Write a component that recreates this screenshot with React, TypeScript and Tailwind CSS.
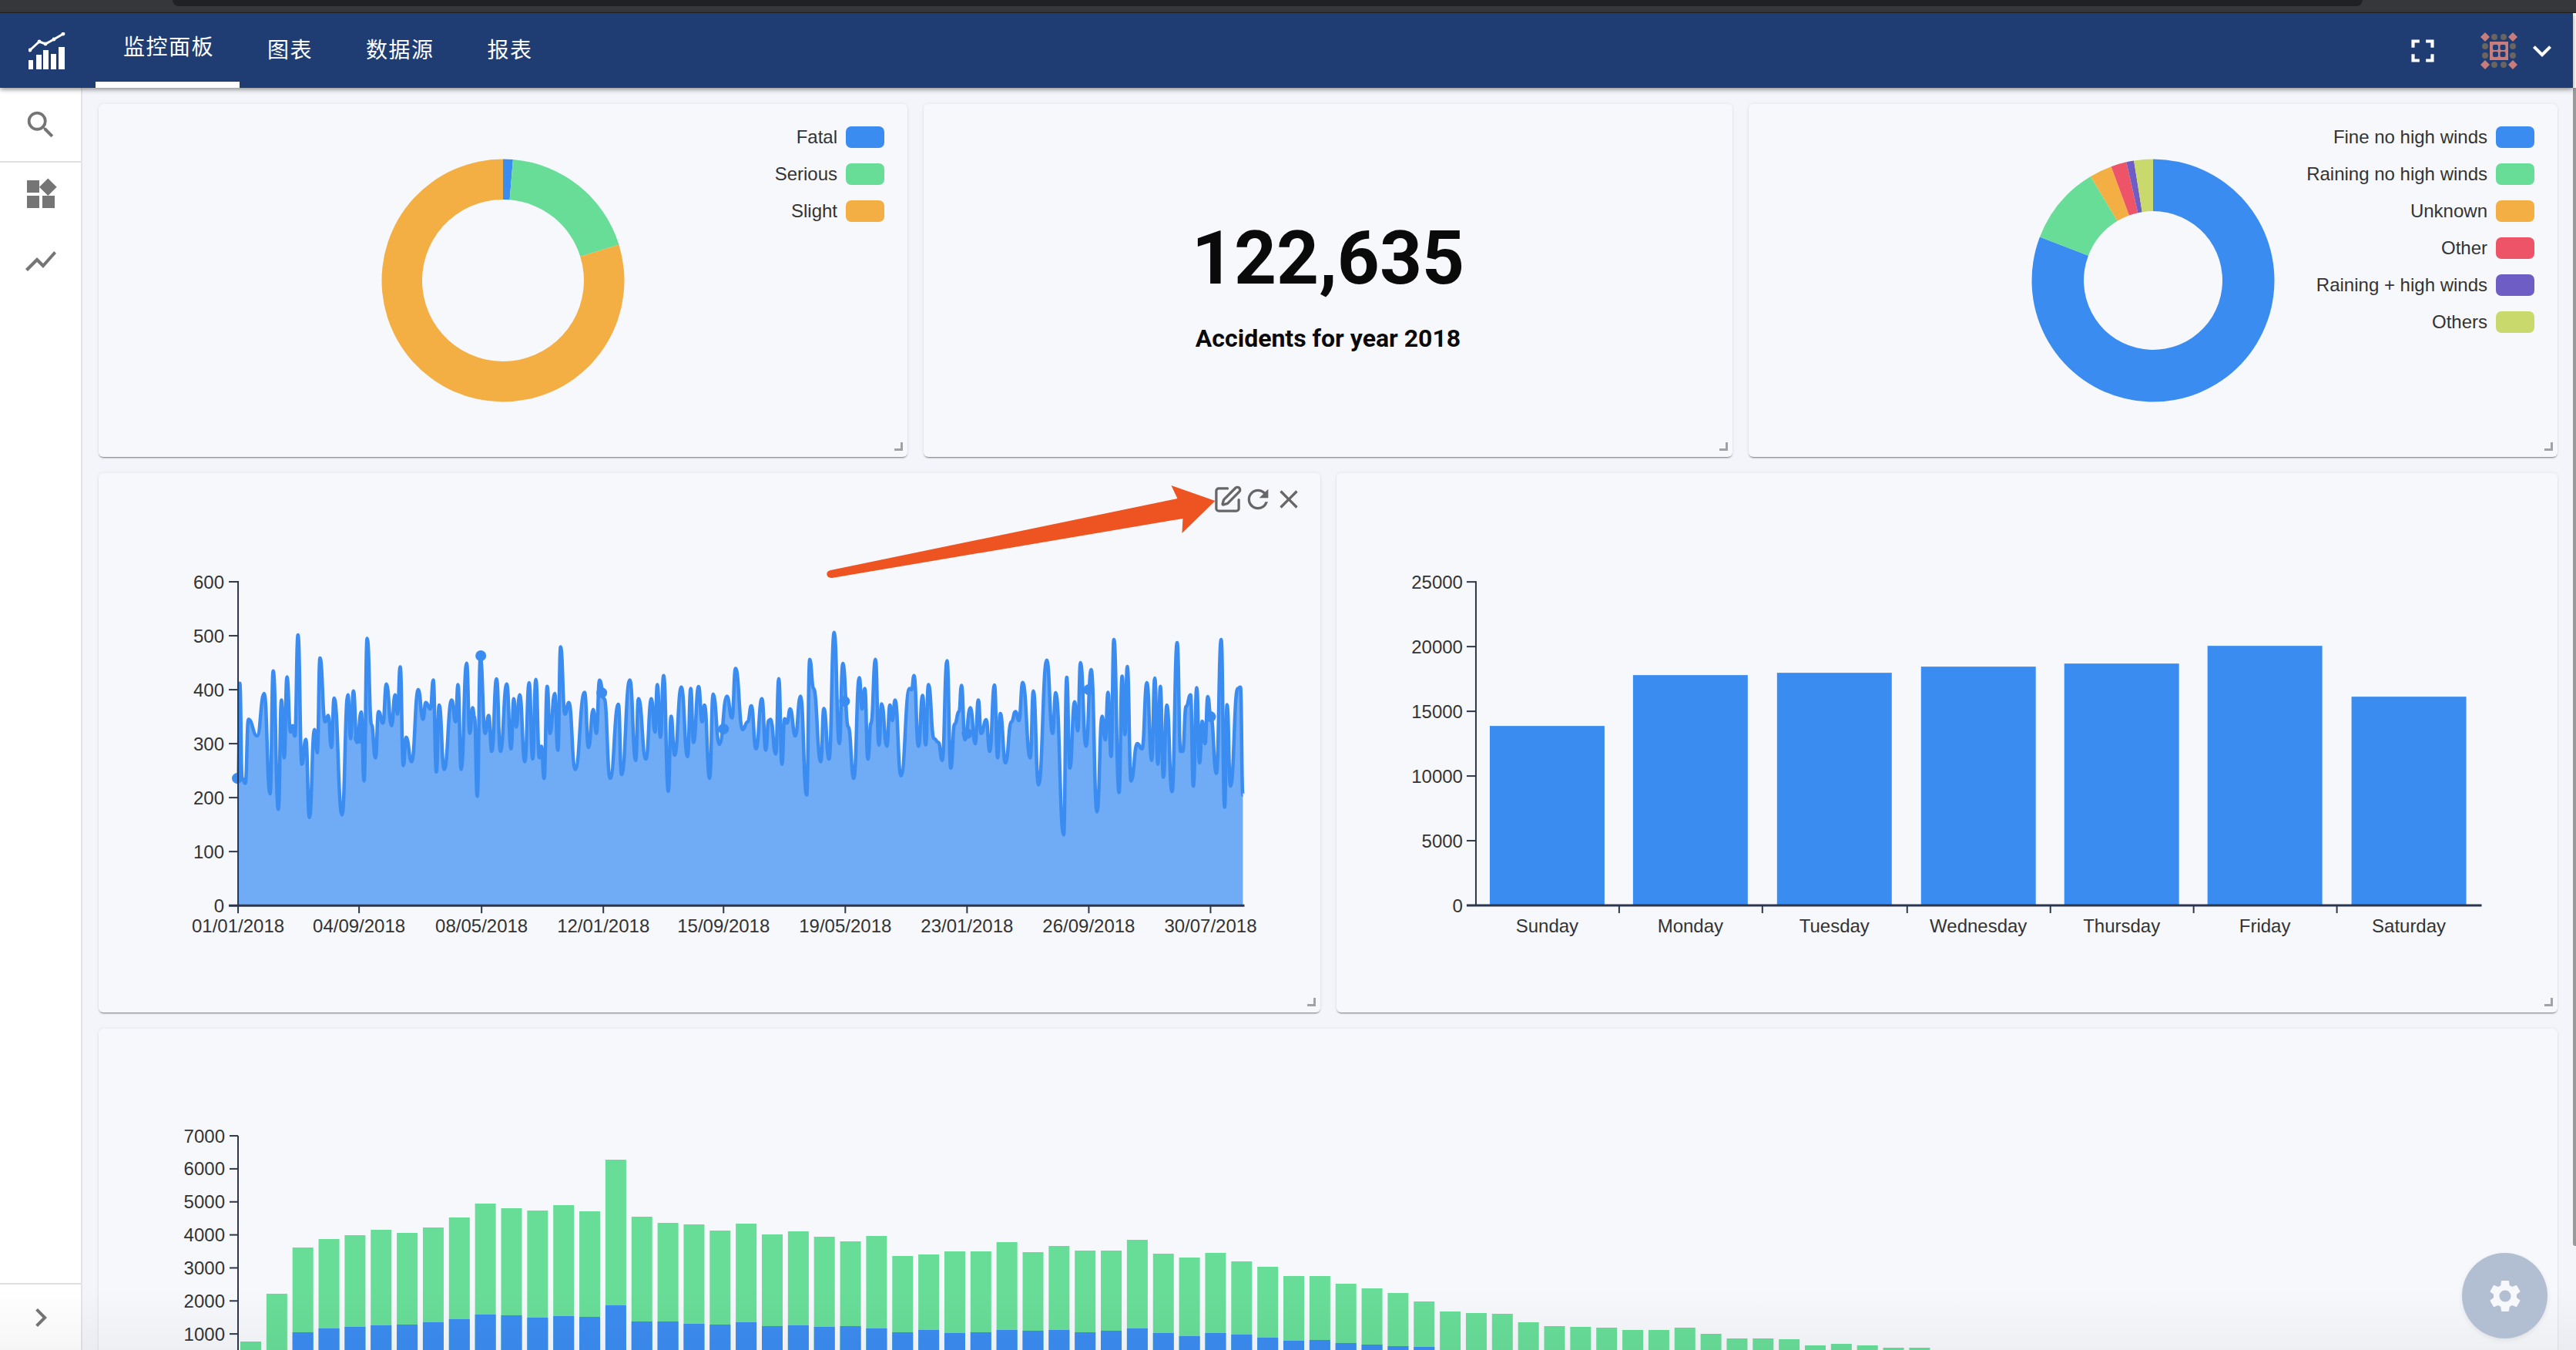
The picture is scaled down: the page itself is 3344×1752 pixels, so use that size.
import { SquarePen } from "lucide-react";
import {
  MdClose,
  MdExpandMore,
  MdFullscreen,
  MdKeyboardArrowRight,
  MdRefresh,
  MdSearch,
  MdSettings,
  MdShowChart,
  MdWidgets,
} from "react-icons/md";

const BLUE = "#3b8cf0";
const GREEN = "#68dd98";
const ORANGE = "#f3af44";
const RED = "#ee5468";
const PURPLE = "#6f5dc6";
const LIME = "#c9d96c";

type Point = [number, number];

// traced from the reference, first half in one crop scale, second half in another
const LINE_A: number[] = [
  214,870, 218,500, 224,870, 232,890, 240,640, 262,705, 280,540, 295,930, 303,452, 316,990, 324,565, 331,790, 338,475, 347,690, 352,665, 358,705,
  366,312, 376,815, 386,718, 395,1022, 408,680, 415,770, 422,402, 435,650, 443,625, 451,750, 458,558, 478,1012, 493,545, 500,715, 507,530, 516,730,
  527,612, 534,880, 542,325, 553,660, 563,790, 571,610, 582,655, 591,503, 604,665, 613,545, 619,620, 626,436, 634,820, 641,710, 655,805, 672,525,
  684,640, 691,575, 703,600, 710,487, 718,845, 725,585, 738,835, 757,565, 767,650, 773,505, 781,835, 795,422, 803,695, 810,595, 815,630, 822,940,
  830,400, 842,695, 851,625, 859,765, 871,483, 881,765, 897,503, 908,755, 915,560, 921,670, 930,545, 943,805, 954,498, 963,795, 971,485, 980,790,
  985,745, 992,870, 1000,512, 1007,695, 1019,540, 1027,760, 1034,358, 1045,620, 1055,575, 1071,835, 1095,535, 1105,750, 1117,602, 1125,695, 1133,488,
  1145,560, 1160,870, 1181,582, 1189,855, 1210,487, 1225,800, 1232,560, 1251,795, 1265,560, 1274,690, 1280,505, 1288,710, 1296,470, 1308,920, 1315,628,
  1324,780, 1341,515, 1357,785, 1365,520, 1372,730, 1385,513, 1394,650, 1400,585, 1413,870, 1422,542, 1438,738, 1457,550, 1470,635, 1479,442, 1497,680,
  1510,650, 1519,588, 1531,755, 1546,560, 1556,760, 1563,645,
];
const LINE_B: number[] = [
  0,640, 15,775, 24,482, 33,815, 41,638, 48,655, 57,600, 72,705, 87,550, 105,935, 114,407, 125,520, 146,805, 155,598, 170,795, 185,302, 200,735, 210,423,
  226,670, 242,870, 258,478, 266,600, 274,520, 283,795, 292,655, 305,407, 315,740, 323,580, 338,745, 347,585, 354,645, 362,565, 379,860, 404,520, 410,525,
  417,470, 430,745, 442,547, 451,740, 459,505, 475,715, 488,730, 499,800, 513,412, 524,830, 535,660, 548,610, 555,508, 565,720, 581,595, 595,735, 604,565,
  612,695, 627,642, 637,765, 651,507, 660,790, 668,618, 683,810, 700,650, 712,610, 722,645, 733,497, 755,790, 764,530, 779,895, 803,410, 820,695, 829,537,
  852,1090, 861,477, 870,830, 884,572, 893,685, 901,420, 917,745, 932,447, 949,1000, 964,628, 973,720, 981,535, 990,785, 998,330, 1013,925, 1022,472,
  1030,700, 1037,435, 1048,880, 1066,735, 1080,755, 1094,498, 1108,800, 1117,480, 1126,815, 1133,512, 1142,865, 1152,585, 1167,922, 1182,342, 1192,765,
  1198,765, 1208,590, 1221,545, 1229,900, 1239,517, 1247,810, 1255,648, 1263,735, 1271,552, 1280,630, 1296,850, 1310,330, 1320,982, 1327,583, 1337,900,
  1358,520, 1366,515, 1373,935,
];

function convert(raw: number[], left: number, scaleX: number): Point[] {
  const out: Point[] = [];
  for (let i = 0; i < raw.length; i += 2) {
    out.push([left + raw[i] / scaleX, 720 + raw[i + 1] / 3]);
  }
  return out;
}

const LINE_POINTS: Point[] = [...convert(LINE_A, 200, 1.96), ...convert(LINE_B, 1000, 2.24)];

function smoothPath(pts: Point[]) {
  let d = `M${pts[0][0]} ${pts[0][1]}`;
  for (let i = 1; i < pts.length; i++) {
    const [px, py] = pts[i - 1];
    const [x, y] = pts[i];
    const mid = (px + x) / 2;
    d += ` C${mid} ${py} ${mid} ${y} ${x} ${y}`;
  }
  return d;
}

const LINE_D = smoothPath(LINE_POINTS);
const AREA_D = `${LINE_D} L1613 1175 L309 1175 Z`;

const LINE_DOTS: Point[] = [
  [308, 1010], [466, 958], [624, 851], [781, 899], [939, 946], [1096, 910], [1255, 952], [1413, 895], [1571, 930],
];
const LINE_XTICKS: [number, string][] = [
  [309, "01/01/2018"], [466, "04/09/2018"], [625, "08/05/2018"], [783, "12/01/2018"], [939, "15/09/2018"],
  [1097, "19/05/2018"], [1255, "23/01/2018"], [1413, "26/09/2018"], [1571, "30/07/2018"],
];

const WEEK_BARS: [number, number, string][] = [
  [1933, 942, "Sunday"], [2119, 876, "Monday"], [2306, 873, "Tuesday"], [2493, 865, "Wednesday"],
  [2679, 861, "Thursday"], [2865, 838, "Friday"], [3052, 904, "Saturday"],
];

// [top of the green bar, top of the blue bar] per bar, in page pixels
const STACKED: Point[] = [
  [1741,1770],[1679,1755],[1619,1729],[1608,1724],[1603,1722],[1596,1720],[1600,1719],[1593,1716],[1580,1712],[1562,1706],
  [1568,1707],[1571,1710],[1564,1708],[1572,1709],[1505,1694],[1579,1715],[1587,1715],[1589,1718],[1597,1719],[1588,1716],
  [1602,1721],[1598,1720],[1605,1722],[1611,1721],[1604,1724],[1630,1729],[1628,1726],[1624,1730],[1624,1729],[1612,1726],
  [1625,1727],[1617,1726],[1623,1729],[1623,1727],[1609,1724],[1627,1730],[1632,1734],[1626,1730],[1637,1732],[1644,1736],
  [1656,1740],[1656,1739],[1666,1743],[1672,1745],[1678,1747],[1689,1748],[1702,1760],[1704,1760],[1705,1760],[1716,1760],
  [1721,1760],[1722,1760],[1723,1760],[1726,1760],[1726,1760],[1723,1760],[1731,1760],[1737,1760],[1737,1760],[1738,1760],
  [1746,1760],[1744,1760],[1746,1760],[1749,1760],[1749,1760],
];

function arc(cx: number, cy: number, r: number, ir: number, from: number, to: number) {
  const rad = (a: number) => (a * Math.PI) / 180;
  const pt = (radius: number, a: number) => `${cx + radius * Math.sin(rad(a))} ${cy - radius * Math.cos(rad(a))}`;
  const large = to - from > 180 ? 1 : 0;
  return `M${pt(r, from)} A${r} ${r} 0 ${large} 1 ${pt(r, to)} L${pt(ir, to)} A${ir} ${ir} 0 ${large} 0 ${pt(ir, from)} Z`;
}

function Donut({ inner, slices }: { inner: number; slices: [number, number, string][] }) {
  return (
    <svg viewBox="0 0 316 316" className="w-[316px] h-[316px]">
      {slices.map(([from, to, color]) => (
        <path key={from} d={arc(158, 158, 157.5, inner, from, to)} fill={color} />
      ))}
    </svg>
  );
}

function Card({ children, className }: { children: React.ReactNode; className?: string }) {
  return (
    <div
      className={
        "relative rounded-[6px] bg-[#f7f8fc] shadow-[0_2px_2px_-1px_rgba(0,0,0,0.5),0_0_5px_rgba(0,0,0,0.07)] " +
        (className ?? "")
      }
    >
      {children}
    </div>
  );
}

function ResizeHandle() {
  return <div className="absolute right-[6px] bottom-[8px] w-[11px] h-[11px] border-r-[3px] border-b-[3px] border-[#a0a2a8]" />;
}

function Legend({ items }: { items: [string, string][] }) {
  return (
    <div className="absolute right-[30px] top-[29px] flex flex-col items-end gap-[20px]">
      {items.map(([label, color]) => (
        <div key={label} className="flex h-[28px] items-center gap-[11px] text-[24px] text-[#333]">
          <span>{label}</span>
          <span className="w-[50px] h-[28px] rounded-[7px]" style={{ backgroundColor: color }} />
        </div>
      ))}
    </div>
  );
}

function Logo() {
  return (
    <svg viewBox="0 0 48 48" className="w-[48px] h-[48px]">
      <rect x="0" y="36" width="6" height="12" fill="#fff" />
      <rect x="10" y="29" width="7" height="19" fill="#fff" />
      <rect x="19" y="23" width="7" height="25" fill="#fff" />
      <rect x="29" y="28" width="7" height="20" fill="#fff" />
      <rect x="39" y="19" width="8" height="29" fill="#fff" />
      <polyline points="2,23 14,12 22,15 33,9 45,2" fill="none" stroke="#fff" strokeWidth="3" />
      <circle cx="2" cy="23" r="2.4" fill="#fff" />
      <circle cx="14" cy="12" r="2.4" fill="#fff" />
      <circle cx="22" cy="15" r="2.4" fill="#fff" />
      <circle cx="33" cy="9" r="2.4" fill="#fff" />
      <circle cx="45" cy="2" r="2.4" fill="#fff" />
    </svg>
  );
}

function Avatar() {
  const diamonds: Point[] = [[6, 6], [42, 6], [6, 42], [42, 42]];
  const dots: Point[] = [[18, 6], [30, 6], [18, 42], [30, 42], [6, 18], [6, 30], [42, 18], [42, 30]];
  const inner: Point[] = [[16, 16], [25.5, 16], [16, 25], [25.5, 25]];
  return (
    <svg viewBox="0 0 48 48" className="w-[48px] h-[48px]">
      {dots.map(([x, y]) => (
        <circle key={`${x}-${y}`} cx={x} cy={y} r="4" fill="#6b6560" />
      ))}
      {diamonds.map(([x, y]) => (
        <polygon key={`${x}-${y}`} points={`${x},${y - 6} ${x + 6},${y} ${x},${y + 6} ${x - 6},${y}`} fill="#c97c7c" />
      ))}
      <rect x="12" y="12" width="24" height="24" fill="#c97c7c" />
      {inner.map(([x, y]) => (
        <rect key={`${x}-${y}`} x={x} y={y} width="7" height="7" rx="2" fill="#1f3d73" />
      ))}
    </svg>
  );
}

function LineChart() {
  const yTicks = [0, 100, 200, 300, 400, 500, 600];
  return (
    <svg viewBox="128 614 1585 700" className="w-full h-full block">
      <path d={AREA_D} fill="#70abf5" />
      <path d={LINE_D} fill="none" stroke={BLUE} strokeWidth="4.5" strokeLinejoin="round" />
      {LINE_DOTS.map(([x, y]) => (
        <circle key={x} cx={x} cy={y} r="7" fill={BLUE} />
      ))}
      <line x1="309" y1="754" x2="309" y2="1176" stroke="#2d3748" strokeWidth="2" />
      <line x1="297" y1="1175" x2="1615" y2="1175" stroke="#2a3550" strokeWidth="3" />
      {yTicks.map((t) => {
        const y = 1175 - t * 0.7;
        return (
          <g key={t}>
            <line x1="297" y1={y} x2="309" y2={y} stroke="#2d3748" strokeWidth="2" />
            <text x="291" y={y + 8.5} textAnchor="end" className="text-[24px] fill-[#333]">
              {t}
            </text>
          </g>
        );
      })}
      {LINE_XTICKS.map(([x, label]) => (
        <g key={label}>
          <line x1={x} y1="1175" x2={x} y2="1185" stroke="#2d3748" strokeWidth="2" />
          <text x={x} y="1210" textAnchor="middle" className="text-[24px] fill-[#333]">
            {label}
          </text>
        </g>
      ))}
      <path d="M1078 740 L1528 647 L1520 630 L1577 650 L1534 692 L1535 673 L1080 750 Q1073 750 1073 745 Q1073 741 1078 740 Z" fill="#ee5322" />
    </svg>
  );
}

function WeekChart() {
  const yTicks = [0, 5000, 10000, 15000, 20000, 25000];
  const xTicks = [2101, 2287, 2475, 2661, 2847, 3033];
  return (
    <svg viewBox="1734 614 1586 700" className="w-full h-full block">
      {WEEK_BARS.map(([x, top, label]) => (
        <g key={label}>
          <rect x={x} y={top} width="149" height={1175 - top} fill={BLUE} />
          <text x={x + 74.5} y="1210" textAnchor="middle" className="text-[24px] fill-[#333]">
            {label}
          </text>
        </g>
      ))}
      <line x1="1915" y1="754" x2="1915" y2="1175" stroke="#2d3748" strokeWidth="2" />
      <line x1="1903" y1="1175" x2="3221" y2="1175" stroke="#2a3550" strokeWidth="3" />
      {yTicks.map((t) => {
        const y = 1175 - (t / 25000) * 420;
        return (
          <g key={t}>
            <line x1="1903" y1={y} x2="1915" y2={y} stroke="#2d3748" strokeWidth="2" />
            <text x="1898" y={y + 8.5} textAnchor="end" className="text-[24px] fill-[#333]">
              {t}
            </text>
          </g>
        );
      })}
      {xTicks.map((x) => (
        <line key={x} x1={x} y1="1175" x2={x} y2="1185" stroke="#2d3748" strokeWidth="2" />
      ))}
    </svg>
  );
}

function StackedChart() {
  const yTicks = [1000, 2000, 3000, 4000, 5000, 6000, 7000];
  return (
    <svg viewBox="128 1335 3192 660" className="w-full h-full block">
      {STACKED.map(([green, blue], i) => {
        const x = 312 + i * 33.85;
        return (
          <g key={i}>
            <rect x={x} y={green} width="27" height={1775 - green} fill={GREEN} />
            <rect x={x} y={blue} width="27" height={1775 - blue} fill={BLUE} />
          </g>
        );
      })}
      <line x1="309" y1="1474" x2="309" y2="1775" stroke="#2d3748" strokeWidth="2" />
      {yTicks.map((t) => {
        const y = 1774 - t * 0.04285;
        return (
          <g key={t}>
            <line x1="298" y1={y} x2="309" y2={y} stroke="#2d3748" strokeWidth="2" />
            <text x="292" y={y + 8.5} textAnchor="end" className="text-[24px] fill-[#333]">
              {t}
            </text>
          </g>
        );
      })}
    </svg>
  );
}

export default function App() {
  const tabs = ["监控面板", "图表", "数据源", "报表"];
  return (
    <div className="relative h-[1752px] w-full overflow-hidden bg-white font-['Liberation_Sans','Noto_Sans_CJK_SC',sans-serif]">
      {/* browser chrome leftover at the top */}
      <div className="h-[17px] bg-[#36373b] border-b border-[#1f2022]">
        <div className="ml-[224px] mr-[277px] h-[8px] rounded-b-[10px] bg-[#202124]" />
      </div>

      <header className="relative z-10 mr-[4px] flex h-[97px] items-stretch bg-[#1f3d73] shadow-[0_2px_6px_rgba(0,0,0,0.45)]">
        <div className="flex w-[124px] items-center pl-[37px]">
          <Logo />
        </div>
        <nav className="flex">
          {tabs.map((tab, i) => (
            <div
              key={tab}
              className={
                "flex items-center pl-[36px] pr-[33px] pb-[6px] text-[28px] tracking-[1.5px] text-white font-['Noto_Sans_CJK_SC',sans-serif] " +
                (i === 0 ? "border-b-[8px] border-white pb-[0px]" : "")
              }
            >
              {tab}
            </div>
          ))}
        </nav>
        <div className="ml-auto flex items-center pr-[16px] text-white">
          <MdFullscreen size={50} />
          <div className="ml-[50px]">
            <Avatar />
          </div>
          <div className="ml-[8px]">
            <MdExpandMore size={48} />
          </div>
        </div>
      </header>

      <div className="flex h-[1638px]">
        <aside className="flex w-[107px] shrink-0 flex-col border-r-2 border-[#e2e4e9] bg-white text-[#757575]">
          <div className="flex h-[97px] items-center justify-center border-b-2 border-[#dedfe2]">
            <MdSearch size={46} />
          </div>
          <div className="flex flex-col items-center gap-[39px] pt-[17px]">
            <MdWidgets size={48} />
            <MdShowChart size={48} />
          </div>
          <div className="mt-auto flex h-[87px] items-center justify-center border-t-2 border-[#dedfe2]">
            <MdKeyboardArrowRight size={48} />
          </div>
        </aside>

        <main className="flex min-w-0 flex-1 flex-col gap-[21px] overflow-hidden bg-[#f3f5fa] pt-[21px] pl-[21px] pr-[24px]">
          <div className="grid h-[458px] shrink-0 grid-cols-3 gap-[21px]">
            <Card className="flex items-center justify-center">
              <Donut inner={105} slices={[[0, 4.7, BLUE], [4.7, 72.8, GREEN], [72.8, 360, ORANGE]]} />
              <Legend items={[["Fatal", BLUE], ["Serious", GREEN], ["Slight", ORANGE]]} />
              <ResizeHandle />
            </Card>
            <Card className="flex flex-col items-center pt-[152px] text-[#0a0a0a] font-['Roboto',sans-serif] font-bold">
              <div className="text-[96px] leading-[96px]">122,635</div>
              <div className="mt-[36px] text-[32px] leading-[40px]">Accidents for year 2018</div>
              <ResizeHandle />
            </Card>
            <Card className="flex items-center justify-center">
              <Donut
                inner={90}
                slices={[[0, 291, BLUE], [291, 329, GREEN], [329, 339.8, ORANGE], [339.8, 347.3, RED], [347.3, 350.9, PURPLE], [350.9, 360, LIME]]}
              />
              <Legend
                items={[
                  ["Fine no high winds", BLUE],
                  ["Raining no high winds", GREEN],
                  ["Unknown", ORANGE],
                  ["Other", RED],
                  ["Raining + high winds", PURPLE],
                  ["Others", LIME],
                ]}
              />
              <ResizeHandle />
            </Card>
          </div>

          <div className="grid h-[700px] shrink-0 grid-cols-2 gap-[21px]">
            <Card>
              <LineChart />
              <div className="absolute right-[21px] top-[14px] flex items-center text-[#666]">
                <SquarePen size={39} strokeWidth={2} />
                <MdRefresh size={40} />
                <MdClose size={40} />
              </div>
              <ResizeHandle />
            </Card>
            <Card>
              <WeekChart />
              <ResizeHandle />
            </Card>
          </div>

          <Card className="h-[660px] shrink-0">
            <StackedChart />
          </Card>
        </main>
      </div>

      {/* scrollbar thumb, floating settings button and the faint fade at the bottom lie over the page */}
      <div className="absolute right-0 top-[114px] h-[1503px] w-[4px] rounded-bl-[3px] bg-[#9a9a9a]" />
      <div className="absolute left-0 right-0 bottom-0 h-[80px] bg-linear-to-b from-transparent to-[rgba(0,0,0,0.035)]" />
      <div className="absolute left-[3196px] top-[1626px] flex h-[111px] w-[111px] items-center justify-center rounded-full bg-[#b2bfd3] text-[#f7f8fc] shadow-[0_2px_6px_rgba(0,0,0,0.08)]">
        <MdSettings size={50} />
      </div>
    </div>
  );
}
